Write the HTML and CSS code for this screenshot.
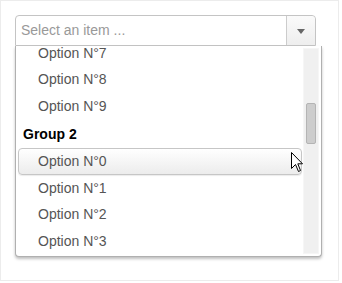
FILE: index.html
```html
<!DOCTYPE html>
<html lang="en">
<head>
    <meta charset="UTF-8">
    <title>Select</title>
    <link rel="stylesheet" href="styles.css">
</head>
<body>
    <div class="frame">
        <!-- closed part of the select -->
        <div class="select">
            <div class="placeholder">Select an item ...</div>
            <div class="arrow"><span class="caret"></span></div>
        </div>
        <!-- open dropdown -->
        <div class="dropdown">
            <div class="list">
                <div class="option">Option N°7</div>
                <div class="option">Option N°8</div>
                <div class="option">Option N°9</div>
                <div class="group">Group 2</div>
                <div class="option active">Option N°0</div>
                <div class="option">Option N°1</div>
                <div class="option">Option N°2</div>
                <div class="option">Option N°3</div>
            </div>
            <div class="scrollbar">
                <div class="track"><div class="thumb"></div></div>
            </div>
            <svg class="cursor" width="13" height="21" viewBox="0 0 13 21">
                <path d="M0.5 0.5 L0.5 16.5 L4.5 12.5 L7.5 19.5 L9.5 18.5 L6.8 11.8 L11.5 11.8 Z" fill="#fff" stroke="#000" stroke-width="1" stroke-linejoin="miter"/>
            </svg>
        </div>
    </div>
</body>
</html>
```
FILE: styles.css
```css
body {
    margin: 0;
    padding: 0;
    background-color: #fff;
    font-family: "Liberation Sans", Arial, sans-serif;
    font-size: 14px;
}
.frame {
    width: 339px;
    height: 281px;
    border: 1px solid #ececec;
    padding: 14px 0 0 14px;
    box-sizing: border-box;
}
.select {
    display: flex;
    width: 301px;
    height: 31px;
    box-sizing: border-box;
    border: 1px solid #c4c4c4;
    border-radius: 4px 4px 0 0;
    background-color: #fff;
}
.placeholder {
    flex: 1;
    padding-left: 5px;
    line-height: 28px;
    color: #999;
}
.arrow {
    width: 28px;
    border-left: 1px solid #ccc;
    border-radius: 0 4px 0 0;
    background: linear-gradient(#fafafa, #eee);
    display: flex;
    align-items: center;
    justify-content: center;
}
.caret {
    width: 0;
    height: 0;
    border-left: 4px solid transparent;
    border-right: 4px solid transparent;
    border-top: 5px solid #666;
    margin-top: 1px;
}
.dropdown {
    position: relative;
    display: flex;
    width: 307px;
    height: 211px;
    box-sizing: border-box;
    border: 1px solid #b0b0b0;
    border-top: none;
    border-radius: 0 0 4px 4px;
    box-shadow: 0 2px 3px rgba(0, 0, 0, 0.25);
    overflow: hidden;
    background-color: #fff;
}
.list {
    flex: 1;
    margin-top: -6.3px;
    padding-left: 2px;
    padding-right: 1px;
}
.option {
    height: 26.67px;
    line-height: 26.67px;
    padding-left: 20px;
    color: #555;
    box-sizing: border-box;
}
.option.active {
    border: 1px solid #c6c6c6;
    border-radius: 4px;
    background: linear-gradient(#fff, #ececec);
    box-shadow: 0 1px 1px rgba(0, 0, 0, 0.08);
    line-height: 24.67px;
    padding-left: 19px;
}
.group {
    height: 26.67px;
    line-height: 26.67px;
    margin-top: 1.6px;
    padding-left: 5px;
    font-weight: bold;
    color: #000;
}
.scrollbar {
    width: 16px;
    padding: 2px 2px 2px 0;
}
.track {
    height: 100%;
    box-sizing: border-box;
    background-color: #f0f0f0;
    border: 1px solid #f6f6f6;
    padding-top: 54px;
}
.thumb {
    width: 10px;
    height: 41px;
    margin-left: 2px;
    box-sizing: border-box;
    background-color: #cdcdcd;
    border: 1px solid #b4b4b4;
    border-radius: 2px;
}
.cursor {
    position: absolute;
    left: 275px;
    top: 106px;
}
```
